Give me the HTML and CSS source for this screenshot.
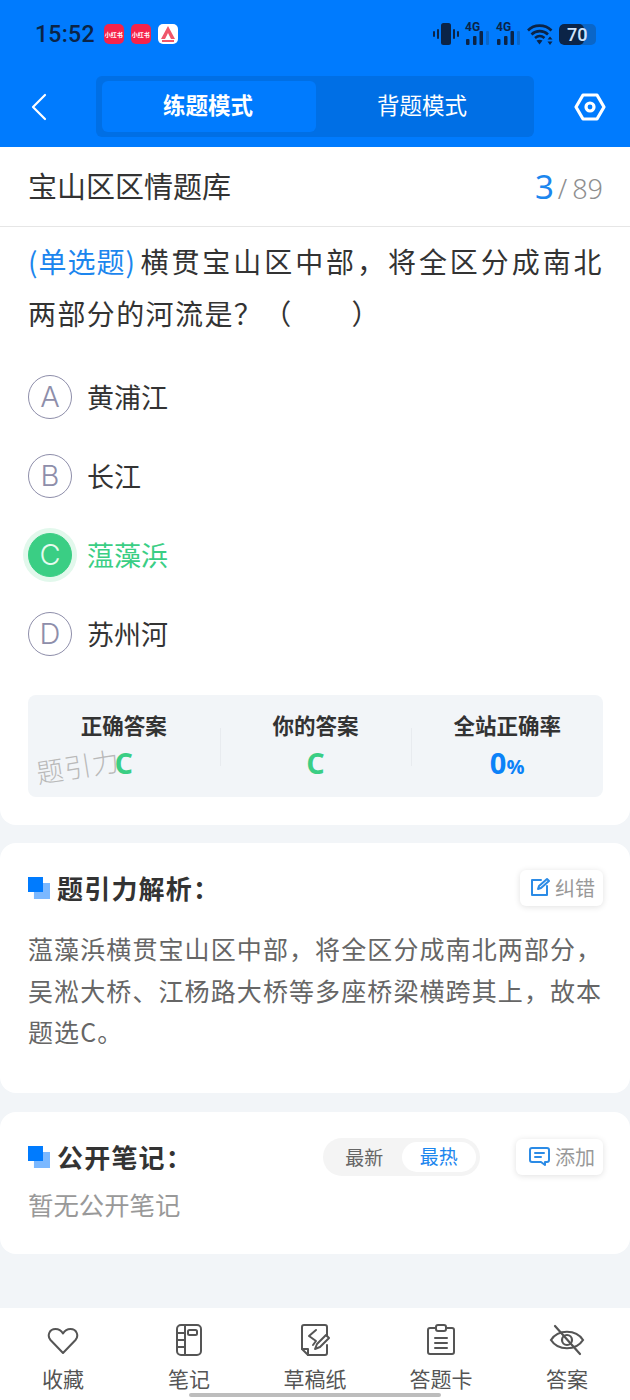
FILE: index.html
```html
<!DOCTYPE html>
<html lang="zh-CN">
<head>
    <meta charset="UTF-8">
    <meta name="viewport" content="width=device-width, initial-scale=1.0">
    <title>宝山区区情题库</title>
    <link rel="stylesheet" href="styles.css">
</head>
<body>
<div class="page">
    <header class="header">
        <div class="status">
            <span class="time">15:52</span>
            <span class="app-icon red">小红书</span>
            <span class="app-icon red">小红书</span>
            <span class="app-icon white">
                <svg width="20" height="20" viewBox="0 0 20 20"><path d="M10 2L3 15h4l3-6 3 6h4z" fill="#f0566a"/><rect x="4" y="16" width="12" height="2" fill="#f0566a"/></svg>
            </span>
            <div class="status-right">
                <svg width="26" height="22" viewBox="0 0 26 22" fill="#0b2447"><rect x="8" y="0" width="10" height="22" rx="2.5"/><rect x="4" y="6" width="2" height="10" rx="1"/><rect x="0" y="8" width="2" height="6" rx="1"/><rect x="20" y="6" width="2" height="10" rx="1"/><rect x="24" y="8" width="2" height="6" rx="1"/></svg>
                <div class="signal"><span class="g4">4G</span><svg width="25" height="14" viewBox="0 0 25 14"><rect x="1" y="8" width="3.500" height="6" rx="1" fill="#0b2447"/><rect x="8" y="5" width="3.500" height="9" rx="1" fill="#0b2447"/><rect x="14.500" y="0" width="3.500" height="14" rx="1" fill="#0b2447"/><rect x="21" y="0" width="3" height="14" rx="1" fill="#0a66c8"/></svg></div>
                <div class="signal"><span class="g4">4G</span><svg width="25" height="14" viewBox="0 0 25 14"><rect x="1" y="8" width="3.500" height="6" rx="1" fill="#0b2447"/><rect x="8" y="5" width="3.500" height="9" rx="1" fill="#0b2447"/><rect x="14.500" y="0" width="3.500" height="14" rx="1" fill="#0b2447"/><rect x="21" y="0" width="3" height="14" rx="1" fill="#0a66c8"/></svg></div>
                <svg width="26" height="22" viewBox="0 0 26 22" fill="none" stroke="#0b2447" stroke-width="2.600"><path d="M1 7.500C7 1 18 1 24.500 7.500"/><path d="M4.500 11.500C9 7 16.500 7 21 11.500"/><path d="M8 15c3-2.500 6.500-2.500 9.500 0"/><path d="M12.500 21.500l-3-4c2-1 4-1 6 0z" fill="#0b2447" stroke="none"/><path d="M23 13.500l2.500 3h-5zM23 22l2.500-3.500h-5z" fill="#0b2447" stroke="none"/></svg>
                <div class="battery"><span class="battery-fill">70</span></div>
            </div>
        </div>
        <div class="nav">
            <svg class="back" width="18" height="28" viewBox="0 0 18 28" fill="none" stroke="#fff" stroke-width="2.200" stroke-linecap="round" stroke-linejoin="round"><path d="M15 2L3 14l12 12"/></svg>
            <div class="tabs">
                <div class="tab active">练题模式</div>
                <div class="tab">背题模式</div>
            </div>
            <svg class="settings" width="32" height="28" viewBox="0 0 32 28" fill="none" stroke="#fff" stroke-width="3.200" stroke-linejoin="round"><path d="M9 2h14l7 12-7 12H9L2 14z"/><circle cx="16" cy="14" r="4"/></svg>
        </div>
    </header>

    <section class="card question-card">
        <div class="bank-row">
            <span class="bank-name">宝山区区情题库</span>
            <span class="progress"><b>3</b><i>/</i>89</span>
        </div>
        <p class="question"><span class="q-type">(单选题)</span>横贯宝山区中部，将全区分成南北两部分的河流是？（　　）</p>
        <div class="options">
            <div class="option"><span class="letter">A</span>黄浦江</div>
            <div class="option"><span class="letter">B</span>长江</div>
            <div class="option right"><span class="letter">C</span>蕰藻浜</div>
            <div class="option"><span class="letter">D</span>苏州河</div>
        </div>
        <div class="stats">
            <div class="stat"><div class="stat-label">正确答案</div><div class="stat-value green">C</div></div>
            <div class="stat"><div class="stat-label">你的答案</div><div class="stat-value green">C</div></div>
            <div class="stat"><div class="stat-label">全站正确率</div><div class="stat-value blue">0<small>%</small></div></div>
            <span class="watermark">题引力</span>
        </div>
    </section>

    <section class="card analysis-card">
        <div class="section-head">
            <span class="mark"></span>
            <h2>题引力解析：</h2>
            <div class="small-btn">
                <svg width="20" height="20" viewBox="0 0 20 20" fill="none" stroke="#2b8be6" stroke-width="2" stroke-linecap="round" stroke-linejoin="round"><path d="M11 3H2v15h15V9"/><path d="M8 12l1-3 8-7 2 2-8 7z"/></svg>
                纠错
            </div>
        </div>
        <p class="analysis">蕰藻浜横贯宝山区中部，将全区分成南北两部分，吴淞大桥、江杨路大桥等多座桥梁横跨其上，故本题选C。</p>
    </section>

    <section class="card notes-card">
        <div class="section-head">
            <span class="mark"></span>
            <h2>公开笔记：</h2>
            <div class="switch"><span>最新</span><span class="on">最热</span></div>
            <div class="small-btn">
                <svg width="21" height="20" viewBox="0 0 21 20" fill="none" stroke="#2b8be6" stroke-width="2" stroke-linecap="round" stroke-linejoin="round"><path d="M3 2h15a2 2 0 0 1 2 2v10a2 2 0 0 1-2 2h-2v3l-4-3H3a2 2 0 0 1-2-2V4a2 2 0 0 1 2-2z"/><path d="M6 7h9M6 11h6"/></svg>
                添加
            </div>
        </div>
        <p class="no-notes">暂无公开笔记</p>
    </section>

    <nav class="bottom">
        <div class="bottom-item">
            <svg width="32" height="30" viewBox="0 0 32 30" fill="none" stroke="#555" stroke-width="2" stroke-linejoin="round"><path d="M16 27L3.500 14C0 10 2 3 8.500 3c3.500 0 6 2 7.500 4.500C17.500 5 20 3 23.500 3 30 3 32 10 28.500 14z"/></svg>
            <span>收藏</span>
        </div>
        <div class="bottom-item">
            <svg width="28" height="32" viewBox="0 0 28 32" fill="none" stroke="#555" stroke-width="2"><rect x="2" y="1" width="24" height="30" rx="4"/><path d="M10 1v30M2 9h8M2 16h8M2 23h8"/><rect x="13" y="6" width="9" height="5" rx="1.500"/></svg>
            <span>笔记</span>
        </div>
        <div class="bottom-item">
            <svg width="30" height="32" viewBox="0 0 30 32" fill="none" stroke="#555" stroke-width="2" stroke-linejoin="round" stroke-linecap="round"><path d="M27 12V3a2 2 0 0 0-2-2H4a2 2 0 0 0-2 2v22l6 6h17a2 2 0 0 0 2-2v-8"/><path d="M2 25h6v6"/><path d="M16 6l-7 6 7 5-3 4"/><path d="M15 25l2-5 9-9 3 3-9 9z"/></svg>
            <span>草稿纸</span>
        </div>
        <div class="bottom-item">
            <svg width="28" height="32" viewBox="0 0 28 32" fill="none" stroke="#555" stroke-width="2" stroke-linecap="round"><path d="M8 4H3a2 2 0 0 0-2 2v22a2 2 0 0 0 2 2h22a2 2 0 0 0 2-2V6a2 2 0 0 0-2-2h-5"/><rect x="9" y="1" width="10" height="6" rx="2"/><path d="M8 14h12M8 19h12M8 24h12"/></svg>
            <span>答题卡</span>
        </div>
        <div class="bottom-item">
            <svg width="36" height="32" viewBox="0 0 36 32" fill="none" stroke="#555" stroke-width="2.200" stroke-linecap="round"><path d="M2 16C9 5 27 5 34 16 27 27 9 27 2 16z"/><circle cx="18" cy="16" r="5"/><path d="M6 2l25 28"/></svg>
            <span>答案</span>
        </div>
        <div class="home-bar"></div>
    </nav>
</div>
</body>
</html>
```

FILE: styles.css
```css
*{
    box-sizing: border-box;
}
body{
    margin: 0;
    background-color: #f2f5f8;
    font-family: "Noto Sans CJK SC", "Noto Sans", sans-serif;
    color: #333;
}
.page{
    width: 630px;
    height: 1400px;
    display: flex;
    flex-direction: column;
    overflow: hidden;
}
.header{
    height: 147px;
    background-color: #007bfe;
    flex-shrink: 0;
}
.status{
    height: 68px;
    padding: 0 34px 0 35px;
    display: flex;
    align-items: center;
}
.time{
    font-family: Roboto, sans-serif;
    font-size: 23px;
    font-weight: 500;
    color: #0b2447;
    margin-right: 9px;
    letter-spacing: 0.3px;
}
.app-icon{
    width: 20px;
    height: 20px;
    border-radius: 5px;
    margin-right: 7px;
    font-size: 6px;
    font-weight: 700;
    color: #fff;
    display: flex;
    align-items: center;
    justify-content: center;
    white-space: nowrap;
    overflow: hidden;
}
.app-icon.red{
    background-color: #f5234a;
}
.app-icon.white{
    background-color: #fff;
}
.status-right{
    margin-left: auto;
    display: flex;
    align-items: center;
    gap: 6px;
}
.signal{
    width: 25px;
    height: 22px;
    position: relative;
    display: flex;
    align-items: flex-end;
}
.g4{
    position: absolute;
    left: 0;
    top: -1px;
    font-family: Roboto, sans-serif;
    font-size: 12px;
    line-height: 11px;
    font-weight: 700;
    color: #0b2447;
}
.battery{
    width: 37px;
    height: 21px;
    border-radius: 5px;
    background-color: #0a66c8;
    position: relative;
    overflow: hidden;
}
.battery-fill{
    display: block;
    width: 25px;
    height: 21px;
    border-radius: 5px;
    background-color: #0b2447;
    color: #cfe3fa;
    font-family: Roboto, sans-serif;
    font-size: 18px;
    font-weight: 500;
    line-height: 21px;
    padding-left: 8px;
    white-space: nowrap;
}
.nav{
    height: 61px;
    margin-top: 8px;
    padding: 0 24px 0 30px;
    display: flex;
    align-items: center;
}
.tabs{
    width: 438px;
    height: 61px;
    margin-left: 48px;
    padding: 5px 4px 5px 6px;
    border-radius: 6px;
    background-color: #006fe5;
    display: flex;
}
.tab{
    width: 214px;
    padding: 0 2px 5px 0;
    font-size: 22.5px;
    color: #fff;
    display: flex;
    align-items: center;
    justify-content: center;
}
.tab.active{
    background-color: #007bfe;
    border-radius: 6px;
    font-weight: 700;
}
.settings{
    margin-left: auto;
}
.card{
    background-color: #fff;
    border-radius: 16px;
    flex-shrink: 0;
}
.question-card{
    height: 678px;
    border-radius: 0 0 16px 16px;
    padding: 0 27px 0 28px;
}
.bank-row{
    height: 80px;
    margin: 0 -27px 0 -28px;
    padding: 0 27px 0 28px;
    border-bottom: 1px solid #e6e6e6;
    display: flex;
    align-items: center;
    justify-content: space-between;
}
.bank-name{
    font-size: 29px;
    line-height: 40px;
    margin-top: -3px;
    color: #333;
}
.progress{
    font-family: "Noto Sans", sans-serif;
    font-size: 27px;
    font-weight: 300;
    color: #8f8f8f;
    display: flex;
    align-items: baseline;
}
.progress b{
    font-weight: 400;
    font-size: 33px;
    color: #1c86ee;
    margin-left: 1px;
}
.progress i{
    font-style: normal;
    margin: 0 5px 0 4px;
}
.question{
    margin: 8px 0 0;
    font-size: 28px;
    line-height: 52px;
    letter-spacing: 1.4px;
    color: #333;
    text-align: justify;
}
.q-type{
    display: inline-block;
    color: #1c86ee;
    letter-spacing: 1px;
    margin-right: 3px;
}
.options{
    margin-top: 18px;
}
.option{
    height: 79px;
    display: flex;
    align-items: center;
    font-size: 27px;
    color: #333;
}
.letter{
    width: 44px;
    height: 44px;
    border: 1.500px solid #8e8eaa;
    border-radius: 50%;
    margin-right: 15px;
    color: #8e8eaa;
    font-family: Inter, sans-serif;
    font-size: 29px;
    font-weight: 300;
    display: flex;
    align-items: center;
    justify-content: center;
}
.option.right{
    color: #3ace84;
}
.option.right .letter{
    background-color: #3ace84;
    border-color: #3ace84;
    color: #e6fbef;
    box-shadow: 0 0 0 5px #e2f8ec;
}
.stats{
    position: relative;
    height: 102px;
    margin-top: 22px;
    background-color: #f2f5f8;
    border-radius: 8px;
    display: flex;
}
.stat{
    flex: 1;
    text-align: center;
    padding-top: 14px;
    position: relative;
}
.stat + .stat::before{
    content: "";
    position: absolute;
    left: 0;
    top: 33px;
    height: 38px;
    border-left: 1px solid #e8ebef;
}
.stat-label{
    font-size: 21.5px;
    line-height: 32px;
    font-weight: 700;
    color: #333;
}
.stat-value{
    font-family: "Open Sans", sans-serif;
    font-size: 29px;
    font-weight: 700;
    line-height: 38px;
    margin-top: 3px;
}
.stat-value small{
    font-size: 20px;
}
.green{
    color: #3ace84;
}
.blue{
    color: #0b82f8;
}
.watermark{
    position: absolute;
    left: 8px;
    top: 55px;
    font-size: 27px;
    line-height: 32px;
    letter-spacing: 1px;
    color: #b9b9b9;
    font-weight: 300;
    transform: rotate(-9deg);
}
.analysis-card{
    height: 250px;
    margin-top: 18px;
    padding: 25px 27px 0 28px;
}
.notes-card{
    height: 142px;
    margin-top: 19px;
    padding: 25px 27px 0 28px;
}
.section-head{
    height: 40px;
    display: flex;
    align-items: center;
}
.section-head h2{
    margin: -2px 0 0 7px;
    font-size: 26px;
    font-weight: 700;
    letter-spacing: 1.2px;
    color: #333;
}
.mark{
    position: relative;
    width: 22px;
    height: 22px;
    background-color: #7bb8ff;
    background-image: linear-gradient(#007bfe, #007bfe);
    background-size: 15px 15px;
    background-repeat: no-repeat;
    clip-path: polygon(0 0, 68% 0, 68% 27%, 100% 27%, 100% 100%, 27% 100%, 27% 68%, 0 68%);
}
.small-btn{
    margin-left: auto;
    height: 36px;
    padding: 0 8px 2px 10px;
    border-radius: 6px;
    background-color: #fff;
    box-shadow: 0 1px 6px rgba(0, 0, 0, 0.12);
    display: flex;
    align-items: center;
    gap: 5px;
    font-size: 20px;
    color: #999;
}
.switch{
    margin-left: auto;
    width: 157px;
    height: 38px;
    padding: 4px;
    border-radius: 19px;
    background-color: #f4f4f4;
    display: flex;
    align-items: center;
    font-size: 19px;
    color: #666;
}
.switch span{
    width: 75px;
    text-align: center;
    margin-top: -2px;
}
.switch .on{
    height: 30px;
    margin-top: 0;
    line-height: 28px;
    border-radius: 15px;
    background-color: #fff;
    color: #1c86ee;
}
.switch + .small-btn{
    margin-left: 36px;
    padding: 0 8px 2px 13px;
}
.analysis{
    margin: 20px 0 0;
    font-size: 25px;
    line-height: 41.5px;
    letter-spacing: 1.1px;
    color: #666;
}
.no-notes{
    margin: 9px 0 0;
    font-size: 25.4px;
    line-height: 36px;
    color: #999;
}
.bottom{
    position: relative;
    height: 92px;
    margin-top: auto;
    background-color: #fff;
    display: flex;
    flex-shrink: 0;
}
.bottom-item{
    flex: 1;
    display: flex;
    flex-direction: column;
    align-items: center;
    justify-content: flex-end;
    padding-bottom: 7px;
    font-size: 21px;
    line-height: 30px;
    color: #555;
}
.bottom-item svg{
    margin-bottom: 7px;
}
.home-bar{
    position: absolute;
    left: 189px;
    bottom: 3px;
    width: 252px;
    height: 4px;
    border-radius: 2px;
    background-color: #bdbdbd;
}
```
